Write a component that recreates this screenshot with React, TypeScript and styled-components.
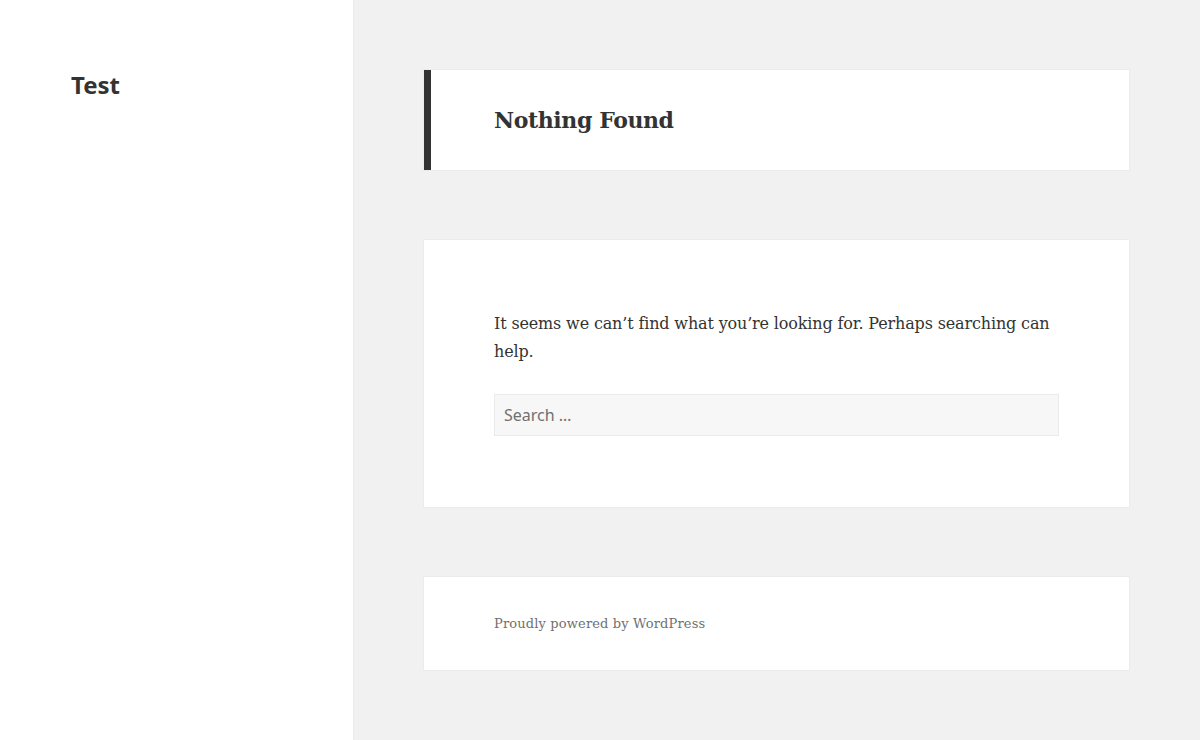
import React from "react";
import styled, { createGlobalStyle } from "styled-components";

const GlobalStyle = createGlobalStyle`
  html, body {
    margin: 0;
    padding: 0;
  }
  body {
    background: #f1f1f1;
    color: #333;
    font-family: "DejaVu Serif", "Liberation Serif", serif;
  }
`;

const Page = styled.div`
  display: flex;
  min-height: 740px;
  background: #f1f1f1;
`;

const Sidebar = styled.aside`
  flex: 0 0 353px;
  background: #fff;
  box-shadow: 0 0 1px rgba(0, 0, 0, 0.15);
  padding: 70px 0 0 71px;
  box-sizing: border-box;
`;

const SiteTitle = styled.p`
  margin: 0;
  font-family: "Noto Sans", "Open Sans", sans-serif;
  font-weight: 700;
  font-size: 24px;
  line-height: 30px;
  color: #333;
`;

const Main = styled.main`
  flex: 0 0 705px;
  margin-left: 71px;
  padding: 70px 0;
  display: flex;
  flex-direction: column;
  gap: 70px;
`;

const Card = styled.section<{ $accent?: boolean; $pad: string }>`
  background: #fff;
  box-shadow: 0 0 1px rgba(0, 0, 0, 0.15);
  padding: ${(p) => p.$pad};
  border-left: ${(p) => (p.$accent ? "7px solid #333" : "0")};
  box-sizing: border-box;
`;

const Title = styled.h1`
  margin: 0;
  font-family: "DejaVu Serif", serif;
  font-weight: 700;
  font-size: 22px;
  line-height: 29px;
  letter-spacing: -0.4px;
  color: #333;
`;

const Text = styled.p`
  margin: 0 0 28px;
  font-size: 16px;
  line-height: 28px;
  letter-spacing: -0.15px;
  color: #333;
`;

const SearchField = styled.input`
  display: block;
  width: 100%;
  box-sizing: border-box;
  height: 42px;
  padding: 0 9px;
  background: #f7f7f7;
  border: 1px solid #eaeaea;
  border-radius: 0;
  font-family: "Noto Sans", "Open Sans", sans-serif;
  font-size: 16px;
  color: #707070;
  outline: none;

  &::placeholder {
    color: #707070;
  }
`;

const Credit = styled.p`
  margin: 0;
  font-size: 13px;
  line-height: 20px;
  letter-spacing: 0.15px;
  color: #707070;
`;

export default function App() {
  return (
    <>
      <GlobalStyle />
      <Page>
        <Sidebar>
          <SiteTitle>Test</SiteTitle>
        </Sidebar>
        <Main>
          <Card $accent $pad="36px 0 35px 63px">
            <Title>Nothing Found</Title>
          </Card>
          <Card $pad="70px 70px 71px 70px">
            <Text>
              It seems we can’t find what you’re looking for. Perhaps searching can help.
            </Text>
            <SearchField type="search" placeholder="Search …" />
          </Card>
          <Card $pad="37px 70px 36px 70px">
            <Credit>Proudly powered by WordPress</Credit>
          </Card>
        </Main>
      </Page>
    </>
  );
}
